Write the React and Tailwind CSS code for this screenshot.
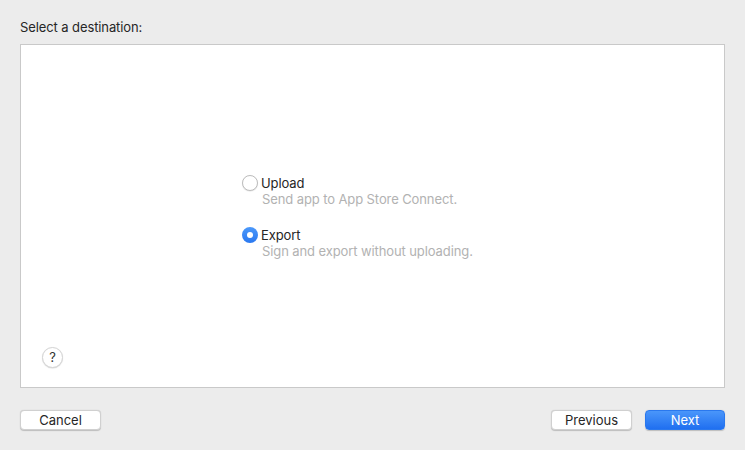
export default function App() {
  const font = { fontFamily: 'Inter, "Liberation Sans", sans-serif' };
  return (
    <div
      className="flex h-[450px] w-[745px] flex-col bg-[#ececec] px-[20px] text-[13px] text-[#262626] antialiased"
      style={font}
    >
      <div className="pt-[19px] leading-[16px] tracking-[-0.1px]">Select a destination:</div>

      <div className="mt-[9px] flex h-[344px] flex-col border border-[#c9c9c9] bg-white">
        <div className="flex flex-1 flex-col justify-center pl-[221px] pt-[42px] tracking-[-0.1px]">
          <RadioOption
            checked={false}
            label="Upload"
            hint="Send app to App Store Connect."
          />
          <div className="h-[20px]" />
          <RadioOption
            checked
            label="Export"
            hint="Sign and export without uploading."
          />
        </div>
        <div className="pb-[19px] pl-[21px]">
          <button
            type="button"
            className="flex h-[21px] w-[21px] items-center justify-center rounded-full border border-[#d4d4d4] bg-white text-[13px] leading-none text-[#333] shadow-[0_0.5px_1px_rgba(0,0,0,0.15)]"
          >
            ?
          </button>
        </div>
      </div>

      <div className="mt-[22px] flex items-center justify-between">
        <button
          type="button"
          className="h-[20px] w-[81px] rounded-[4px] border border-[#d0d0d0] bg-white leading-[18px] text-[#262626] shadow-[0_0.5px_1px_rgba(0,0,0,0.2)]"
        >
          Cancel
        </button>
        <div className="flex gap-[13px]">
          <button
            type="button"
            className="h-[20px] w-[81px] rounded-[4px] border border-[#d0d0d0] bg-white leading-[18px] text-[#262626] shadow-[0_0.5px_1px_rgba(0,0,0,0.2)]"
          >
            Previous
          </button>
          <button
            type="button"
            className="h-[20px] w-[80px] rounded-[4px] border border-[#2a78ee] bg-gradient-to-b from-[#4a96fa] to-[#1f6ff0] leading-[18px] text-white shadow-[0_0.5px_1px_rgba(0,0,0,0.2)]"
          >
            Next
          </button>
        </div>
      </div>
    </div>
  );
}

function RadioOption({ checked, label, hint }) {
  return (
    <div className="flex flex-col">
      <div className="flex items-center gap-[3px] leading-[16px]">
        {checked ? (
          <span className="flex h-[16px] w-[16px] items-center justify-center rounded-full bg-gradient-to-b from-[#4b98fa] to-[#2a78f0]">
            <span className="h-[6px] w-[6px] rounded-full bg-white" />
          </span>
        ) : (
          <span className="h-[16px] w-[16px] rounded-full border border-[#bdbdbd] bg-white shadow-[0_0.5px_1px_rgba(0,0,0,0.12)]" />
        )}
        <span className="text-[#262626]">{label}</span>
      </div>
      <div className="pl-[20px] leading-[16px] text-[#b2b2b2]">{hint}</div>
    </div>
  );
}
